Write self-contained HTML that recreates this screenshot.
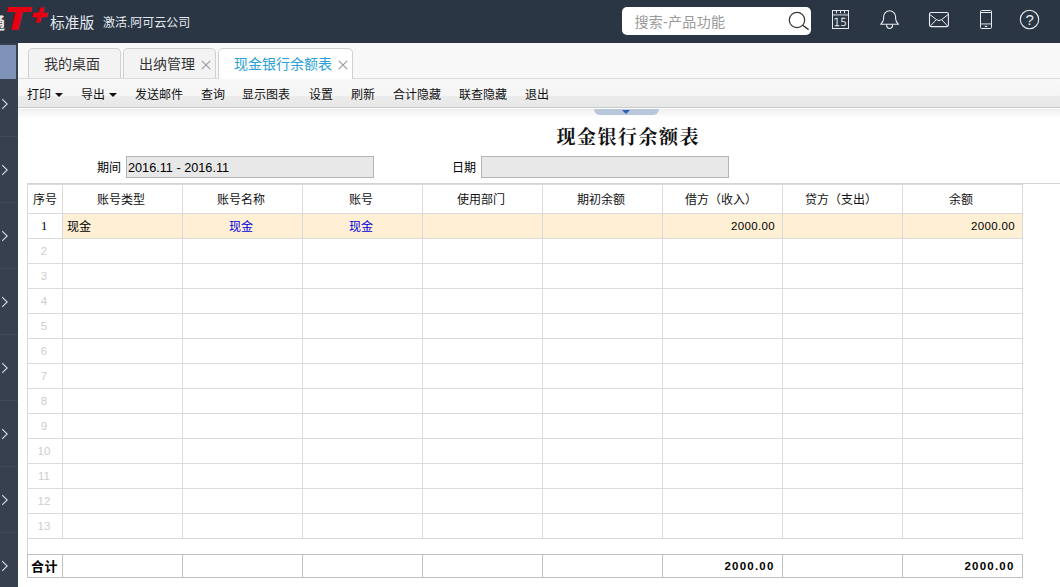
<!DOCTYPE html>
<html lang="zh-CN">
<head>
<meta charset="utf-8">
<title>现金银行余额表</title>
<style>
*{box-sizing:border-box;margin:0;padding:0}
html,body{width:1060px;height:587px;overflow:hidden;background:#fff}
body{position:relative;font-family:"Liberation Sans","Noto Sans CJK SC",sans-serif;font-size:12px;color:#000}
.abs{position:absolute}
#hdr{left:0;top:0;width:1060px;height:43px;background:#2b3644}
#lg0{left:-11px;top:12.5px;font-size:16px;font-weight:bold;color:#e6eaef;line-height:22px}
#lgT{left:1px;top:-1px;font:bold 31px/40px "Liberation Sans",sans-serif;color:#e60012;-webkit-text-stroke:1.5px #e60012;transform:skewX(-13deg) scaleX(1.22);transform-origin:0 100%}
#lgP{left:26px;top:-5.5px;font:bold 27px/40px "Liberation Sans",sans-serif;color:#e60012;-webkit-text-stroke:1.4px #e60012;transform:skewX(-17deg);transform-origin:0 100%}
#ed{left:50px;top:12px;font-size:14.7px;line-height:22px;color:#e3e9ef}
#co{left:103px;top:13px;font-size:12px;line-height:20px;color:#e3e9ef}
#sb{left:622px;top:7px;width:189px;height:28px;background:#fff;border-radius:5px}
#sb span{position:absolute;left:12.5px;top:1px;line-height:29px;font-size:14px;color:#999;letter-spacing:0.3px}
#side{left:0;top:43px;width:18px;height:544px;background:#36404f}
#side .hl{left:0;top:2px;width:16px;height:34px;background:#7e93b7}
#side .sep{left:0;width:18px;height:1px;background:#3f4a5a}
#side svg{position:absolute;left:2px}
#tabs{left:18px;top:43px;width:1042px;height:36px;background:#f8f8f8;border-bottom:1px solid #dadada}
.tab{position:absolute;top:5px;height:30px;border:1px solid #d0d0d0;border-bottom:none;border-radius:5px 5px 0 0;background:#f3f3f3;font-size:14px;color:#333;line-height:31px;white-space:nowrap}
.tab.act{background:#fff;color:#2a9fd8;height:31px}
.tab span{position:absolute;top:0}
.tab svg{position:absolute;top:11px}
#tb{left:18px;top:79px;width:1042px;height:29px;background:linear-gradient(#f8f8f8 0,#f5f5f5 17px,#ececec 17px,#e7e7e7 28px);border-bottom:1px solid #c5cacf}
#tb span{position:absolute;top:1px;line-height:31px;font-size:12px;color:#111;white-space:nowrap}
#tb i{position:absolute;top:14px;width:0;height:0;border:4px solid transparent;border-top:4.5px solid #111;border-bottom:none}
#shadow{left:18px;top:109px;width:1042px;height:9px;background:linear-gradient(#efefef,#fff)}
#handle{left:594px;top:109px;width:65px;height:6px;background:#b9c7db;border-radius:0 0 7px 7px}
#handle i{position:absolute;left:27.5px;top:1px;width:0;height:0;border:4px solid transparent;border-top:4px solid #2d5fb4;border-bottom:none}
#title{left:427.5px;top:124px;width:400px;text-align:center;font-family:"Liberation Serif","Noto Serif CJK SC",serif;font-weight:bold;font-size:19px;line-height:28px;color:#111;letter-spacing:1.5px;text-indent:1.5px}
.lbl{font-size:12px;line-height:22px;top:157px}
.inp{top:156px;height:22px;background:#e8e8e8;border:1px solid #b4b4b4;font-size:12.7px;line-height:23px;padding-left:1px}
#hline{left:27px;top:183px;width:1033px;height:1px;background:#d4d4d4}
table{border-collapse:collapse;position:absolute;left:27px;table-layout:fixed}
#grid{top:184px}
#grid td{border:1px solid #dadada;height:25px;font-size:12px;padding:0;overflow:hidden;white-space:nowrap}
#grid tr.h td{height:29px;text-align:center;color:#111;padding:0 3px 1px 0}
#grid td.n{text-align:center;color:#cdcdcd;font-size:11.5px;padding-right:2px}
#grid tr.sel td{background:#ffefd5}
#grid tr.sel td.n{background:#fff;color:#000;font-family:"Liberation Serif",serif;font-size:12.5px}
#grid td.l{text-align:left;padding:0 0 1px 4px}
#grid td.c{text-align:center;color:#0000dc;padding:0 3px 1px 0}
#grid td.r{text-align:right;padding-right:7px;font-size:11.5px;letter-spacing:0.35px}
#tot{top:554px}
#tot td{border:1px solid #c0c0c0;height:23px;font-size:12px;padding:0;white-space:nowrap;font-weight:bold}
#tot td.r{text-align:right;padding-right:7.5px;font-size:11.5px;letter-spacing:1.2px}
#tot td.l{padding:0 0 1px 3px;letter-spacing:0.6px;font-size:13px}
</style>
</head>
<body>
<div id="hdr" class="abs">
<span class="abs" id="lg0">通</span>
<span class="abs" id="lgT">T</span>
<span class="abs" id="lgP">+</span>
<span class="abs" id="ed">标准版</span>
<span class="abs" id="co">激活.阿可云公司</span>
<div class="abs" id="sb"><span>搜索-产品功能</span>
<svg width="25" height="22" viewBox="0 0 25 22" style="position:absolute;left:164px;top:3px"><circle cx="11" cy="10" r="7.7" fill="none" stroke="#333" stroke-width="1.2"/><path d="M16.8 15.2 L22.6 19.6" stroke="#333" stroke-width="1.4" fill="none"/></svg></div>
<svg class="abs" style="left:830px;top:8px" width="22" height="24" viewBox="0 0 22 24" fill="none" stroke="#e8ebef" stroke-width="1"><rect x="2.5" y="2.5" width="16" height="18"/><path d="M6.5 3v2.2M10.5 3v2.2M14.5 3v2.2"/><rect x="3" y="5.9" width="15" height="1.9" fill="#8b939d" stroke="none"/><text x="10.3" y="17.8" font-family="DejaVu Sans,Liberation Sans,sans-serif" font-weight="200" font-size="10.5" stroke="#e8ebef" stroke-width="0.3" fill="#e8ebef" text-anchor="middle">15</text></svg>
<svg class="abs" style="left:878px;top:8px" width="24" height="24" viewBox="0 0 24 24" fill="none" stroke="#e8ebef" stroke-width="1.1" stroke-linejoin="round"><path d="M2.7 16.3 C4.8 14.2 5.6 13 5.6 10.8 L5.6 8.8 A6 6 0 0 1 17.6 8.8 L17.6 10.8 C17.6 13 18.4 14.2 20.5 16.3 Z"/><path d="M8.7 16.5 v1.1 a2.9 2.9 0 0 0 5.8 0 v-1.1"/></svg>
<svg class="abs" style="left:927px;top:9px" width="24" height="20" viewBox="0 0 24 20" fill="none" stroke="#e8ebef" stroke-width="1.1"><rect x="2.5" y="3.5" width="18.9" height="14.1" rx="1.6"/><path d="M2.8 5.5 L9.4 10.6 Q12 12.6 14.6 10.6 L21.2 5.5M3.3 17.1 L9.4 10.6M20.7 17.1 L14.6 10.6" stroke-width="1"/></svg>
<svg class="abs" style="left:977px;top:8px" width="18" height="24" viewBox="0 0 18 24" fill="none" stroke="#e8ebef" stroke-width="1"><rect x="3.5" y="2.5" width="11" height="18" rx="1"/><path d="M3.5 4.5h11"/><rect x="4" y="15.2" width="10" height="1.4" fill="#aab0b9" stroke="none"/><path d="M7.8 18.4h2.4" stroke-width="1.2"/></svg>
<svg class="abs" style="left:1018px;top:8px" width="24" height="24" viewBox="0 0 24 24" fill="none" stroke="#e8ebef" stroke-width="1.1"><circle cx="11.5" cy="11.5" r="9.2"/><text x="11.6" y="17" font-family="Liberation Sans,sans-serif" font-size="15" fill="#e8ebef" stroke="none" text-anchor="middle">?</text></svg>
</div>
<div id="side" class="abs"><div class="hl abs"></div><svg style="top:55px" width="8" height="12" viewBox="0 0 8 12"><path d="M0.2 1.1 L5.2 6 L0.2 10.9" fill="none" stroke="#d5dae2" stroke-width="1.1"/></svg><div class="sep abs" style="top:93px"></div><svg style="top:121px" width="8" height="12" viewBox="0 0 8 12"><path d="M0.2 1.1 L5.2 6 L0.2 10.9" fill="none" stroke="#d5dae2" stroke-width="1.1"/></svg><div class="sep abs" style="top:159px"></div><svg style="top:187px" width="8" height="12" viewBox="0 0 8 12"><path d="M0.2 1.1 L5.2 6 L0.2 10.9" fill="none" stroke="#d5dae2" stroke-width="1.1"/></svg><div class="sep abs" style="top:225px"></div><svg style="top:253px" width="8" height="12" viewBox="0 0 8 12"><path d="M0.2 1.1 L5.2 6 L0.2 10.9" fill="none" stroke="#d5dae2" stroke-width="1.1"/></svg><div class="sep abs" style="top:291px"></div><svg style="top:319px" width="8" height="12" viewBox="0 0 8 12"><path d="M0.2 1.1 L5.2 6 L0.2 10.9" fill="none" stroke="#d5dae2" stroke-width="1.1"/></svg><div class="sep abs" style="top:357px"></div><svg style="top:385px" width="8" height="12" viewBox="0 0 8 12"><path d="M0.2 1.1 L5.2 6 L0.2 10.9" fill="none" stroke="#d5dae2" stroke-width="1.1"/></svg><div class="sep abs" style="top:423px"></div><svg style="top:451px" width="8" height="12" viewBox="0 0 8 12"><path d="M0.2 1.1 L5.2 6 L0.2 10.9" fill="none" stroke="#d5dae2" stroke-width="1.1"/></svg><div class="sep abs" style="top:489px"></div><svg style="top:517px" width="8" height="12" viewBox="0 0 8 12"><path d="M0.2 1.1 L5.2 6 L0.2 10.9" fill="none" stroke="#d5dae2" stroke-width="1.1"/></svg></div>
<div id="tabs" class="abs"><div class="tab" style="left:10px;width:93px"><span style="left:15px">我的桌面</span></div><div class="tab" style="left:105px;width:93px"><span style="left:15px">出纳管理</span><svg width="10" height="10" viewBox="0 0 10 10" style="left:77px"><path d="M0.8 0.8L9.2 9.2M9.2 0.8L0.8 9.2" stroke="#9a9a9a" stroke-width="1.1" fill="none"/></svg></div><div class="tab act" style="left:200px;width:135px"><span style="left:15px">现金银行余额表</span><svg width="10" height="10" viewBox="0 0 10 10" style="left:119px"><path d="M0.8 0.8L9.2 9.2M9.2 0.8L0.8 9.2" stroke="#9a9a9a" stroke-width="1.1" fill="none"/></svg></div></div>
<div id="tb" class="abs"><span style="left:9px">打印</span><i style="left:37px"></i><span style="left:63px">导出</span><i style="left:91px"></i><span style="left:117px">发送邮件</span><span style="left:183px">查询</span><span style="left:224px">显示图表</span><span style="left:291px">设置</span><span style="left:333px">刷新</span><span style="left:375px">合计隐藏</span><span style="left:441px">联查隐藏</span><span style="left:507px">退出</span></div>
<div id="shadow" class="abs"></div>
<div id="handle" class="abs"><i></i></div>
<div id="title" class="abs">现金银行余额表</div>
<div class="abs lbl" style="left:97px">期间</div>
<div class="abs inp" style="left:126px;width:248px">2016.11 - 2016.11</div>
<div class="abs lbl" style="left:452px">日期</div>
<div class="abs inp" style="left:481px;width:248px"></div>
<div id="hline" class="abs"></div>
<div class="abs" style="left:27px;top:538px;width:1px;height:17px;background:#d4d4d4"></div>
<table id="grid"><colgroup><col style="width:35px"><col style="width:120px"><col style="width:120px"><col style="width:120px"><col style="width:120px"><col style="width:120px"><col style="width:120px"><col style="width:120px"><col style="width:120px"></colgroup>
<tr class="h"><td style="padding-right:0">序号</td><td>账号类型</td><td>账号名称</td><td>账号</td><td>使用部门</td><td>期初余额</td><td>借方（收入）</td><td>贷方（支出）</td><td>余额</td></tr>
<tr class="sel"><td class="n">1</td><td class="l">现金</td><td class="c">现金</td><td class="c">现金</td><td></td><td></td><td class="r">2000.00</td><td></td><td class="r">2000.00</td></tr>
<tr><td class="n">2</td><td></td><td></td><td></td><td></td><td></td><td></td><td></td><td></td></tr>
<tr><td class="n">3</td><td></td><td></td><td></td><td></td><td></td><td></td><td></td><td></td></tr>
<tr><td class="n">4</td><td></td><td></td><td></td><td></td><td></td><td></td><td></td><td></td></tr>
<tr><td class="n">5</td><td></td><td></td><td></td><td></td><td></td><td></td><td></td><td></td></tr>
<tr><td class="n">6</td><td></td><td></td><td></td><td></td><td></td><td></td><td></td><td></td></tr>
<tr><td class="n">7</td><td></td><td></td><td></td><td></td><td></td><td></td><td></td><td></td></tr>
<tr><td class="n">8</td><td></td><td></td><td></td><td></td><td></td><td></td><td></td><td></td></tr>
<tr><td class="n">9</td><td></td><td></td><td></td><td></td><td></td><td></td><td></td><td></td></tr>
<tr><td class="n">10</td><td></td><td></td><td></td><td></td><td></td><td></td><td></td><td></td></tr>
<tr><td class="n">11</td><td></td><td></td><td></td><td></td><td></td><td></td><td></td><td></td></tr>
<tr><td class="n">12</td><td></td><td></td><td></td><td></td><td></td><td></td><td></td><td></td></tr>
<tr><td class="n">13</td><td></td><td></td><td></td><td></td><td></td><td></td><td></td><td></td></tr>
</table>
<table id="tot"><colgroup><col style="width:35px"><col style="width:120px"><col style="width:120px"><col style="width:120px"><col style="width:120px"><col style="width:120px"><col style="width:120px"><col style="width:120px"><col style="width:120px"></colgroup>
<tr><td class="l">合计</td><td></td><td></td><td></td><td></td><td></td><td class="r">2000.00</td><td></td><td class="r">2000.00</td></tr></table>
</body>
</html>
